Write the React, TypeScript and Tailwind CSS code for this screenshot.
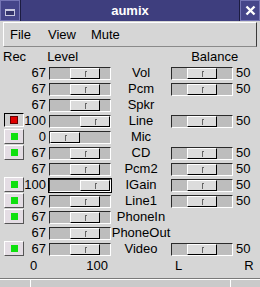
import React from 'react';

type Row = {
  name: string;
  level: number;
  balance?: number;
  rec?: 'on' | 'red';
  focus?: boolean;
};

const rows: Row[] = [
  { name: 'Vol', level: 67, balance: 50 },
  { name: 'Pcm', level: 67, balance: 50 },
  { name: 'Spkr', level: 67 },
  { name: 'Line', level: 100, balance: 50, rec: 'red' },
  { name: 'Mic', level: 0, rec: 'on' },
  { name: 'CD', level: 67, balance: 50, rec: 'on' },
  { name: 'Pcm2', level: 67, balance: 50 },
  { name: 'IGain', level: 100, balance: 50, rec: 'on', focus: true },
  { name: 'Line1', level: 67, balance: 50, rec: 'on' },
  { name: 'PhoneIn', level: 67, rec: 'on' },
  { name: 'PhoneOut', level: 67 },
  { name: 'Video', level: 67, balance: 50, rec: 'on' },
];

// scale widget: 62px trough, 30px thumb
const Slider: React.FC<{ value: number; focus?: boolean }> = ({ value, focus }) => {
  const left = Math.round(value * 0.3);
  return (
    <div
      className={
        'relative h-[13px] w-[62px] border border-t-[#2a2a2a] border-l-[#2a2a2a] border-b-white border-r-white bg-[#bdbdbd] ' +
        (focus ? 'shadow-[0_0_0_1px_#000]' : '')
      }
    >
      <div
        className="absolute top-0 h-[11px] w-[30px] border border-t-white border-l-white border-b-black border-r-black bg-[#dcdcdc]"
        style={{ left }}
      >
        <div className="absolute left-[14px] top-[2px] h-[6px] w-[1px] bg-[#666]" />
        <div className="absolute left-[14px] top-[2px] h-[1px] w-[2px] bg-[#666]" />
      </div>
    </div>
  );
};

const RecButton: React.FC<{ kind: 'on' | 'red' }> = ({ kind }) => {
  if (kind === 'red') {
    return (
      <div className="flex h-[14px] w-[20px] items-center justify-center border border-t-black border-l-black border-b-white border-r-white bg-[#cfcfcf]">
        <div className="h-[8px] w-[8px] border border-[#600] bg-[#e00000]" />
      </div>
    );
  }
  return (
    <div className="flex h-[15px] w-[20px] items-center justify-center border border-t-white border-l-white border-b-[#555] border-r-[#555] bg-[#e4dde4]">
      <div className="h-[7px] w-[7px] bg-[#10e010]" />
    </div>
  );
};

export default function App() {
  return (
    <div
      className="flex h-[287px] w-[260px] flex-col overflow-hidden bg-[#d6d6d6] text-[13px] text-black"
      style={{ fontFamily: '"Liberation Sans", Arial, sans-serif' }}
    >
      {/* title bar */}
      <div className="flex h-[21px] bg-[#3e3e7e]">
        <div className="flex h-[21px] w-[20px] items-center justify-center border border-[#7474b4] bg-[#45458a]">
          <div className="mt-[3px] h-[7px] w-[10px] border border-[#c8c8e0] border-t-2 bg-[#34346c]" />
        </div>
        <div className="w-[1px] bg-[#1c1c40]" />
        <div className="flex-1 text-center text-[13px] font-bold leading-[21px] text-white">aumix</div>
        <div className="w-[1px] bg-[#1c1c40]" />
        <div className="flex h-[21px] w-[20px] items-center justify-center border border-[#7474b4] bg-[#45458a]">
          <svg width="11" height="11" viewBox="0 0 11 11">
            <path d="M1.5 1.5 L9.5 9.5 M9.5 1.5 L1.5 9.5" stroke="white" strokeWidth="2.4" />
          </svg>
        </div>
      </div>

      {/* menu bar */}
      <div className="mx-[3px] mt-[1px] flex h-[25px] items-center border border-t-white border-l-white border-b-[#8a8a8a] border-r-[#3a3a3a]">
        <span className="ml-[6px]">File</span>
        <span className="ml-[17px]">View</span>
        <span className="ml-[15px]">Mute</span>
      </div>

      {/* headers */}
      <div className="mt-[2px] flex h-[16px] items-center leading-[16px]">
        <span className="ml-[3px]">Rec</span>
        <span className="ml-[21px]">Level</span>
        <span className="ml-[113px]">Balance</span>
      </div>

      {rows.map((r) => (
        <div key={r.name} className="flex h-[16px] items-start">
          <div className="ml-[4px] w-[20px]">{r.rec && <RecButton kind={r.rec} />}</div>
          <div className="w-[22px] text-right leading-[16px]">{r.level}</div>
          <div className="ml-[3px] mt-[2px]">
            <Slider value={r.level} focus={r.focus} />
          </div>
          <div className="w-[60px] text-center leading-[16px]">{r.name}</div>
          {r.balance !== undefined && (
            <>
              <div className="mt-[2px]">
                <Slider value={r.balance} />
              </div>
              <div className="ml-[3px] leading-[16px]">{r.balance}</div>
            </>
          )}
        </div>
      ))}

      {/* scale labels */}
      <div className="flex h-[18px] items-center leading-[18px]">
        <span className="ml-[30px]">0</span>
        <span className="ml-[49px]">100</span>
        <span className="ml-[67px]">L</span>
        <span className="ml-[62px]">R</span>
      </div>

      {/* bottom strip */}
      <div className="mt-[3px] flex h-[9px] border-t border-t-[#7a7a7a]">
        <div className="w-[30px] border-t border-t-white bg-[#cacaca]" />
        <div className="flex-1 border-l border-t border-l-white border-t-white bg-[#cacaca]" />
        <div className="w-[30px] border-l border-t border-l-white border-t-white bg-[#cacaca]" />
      </div>
    </div>
  );
}
